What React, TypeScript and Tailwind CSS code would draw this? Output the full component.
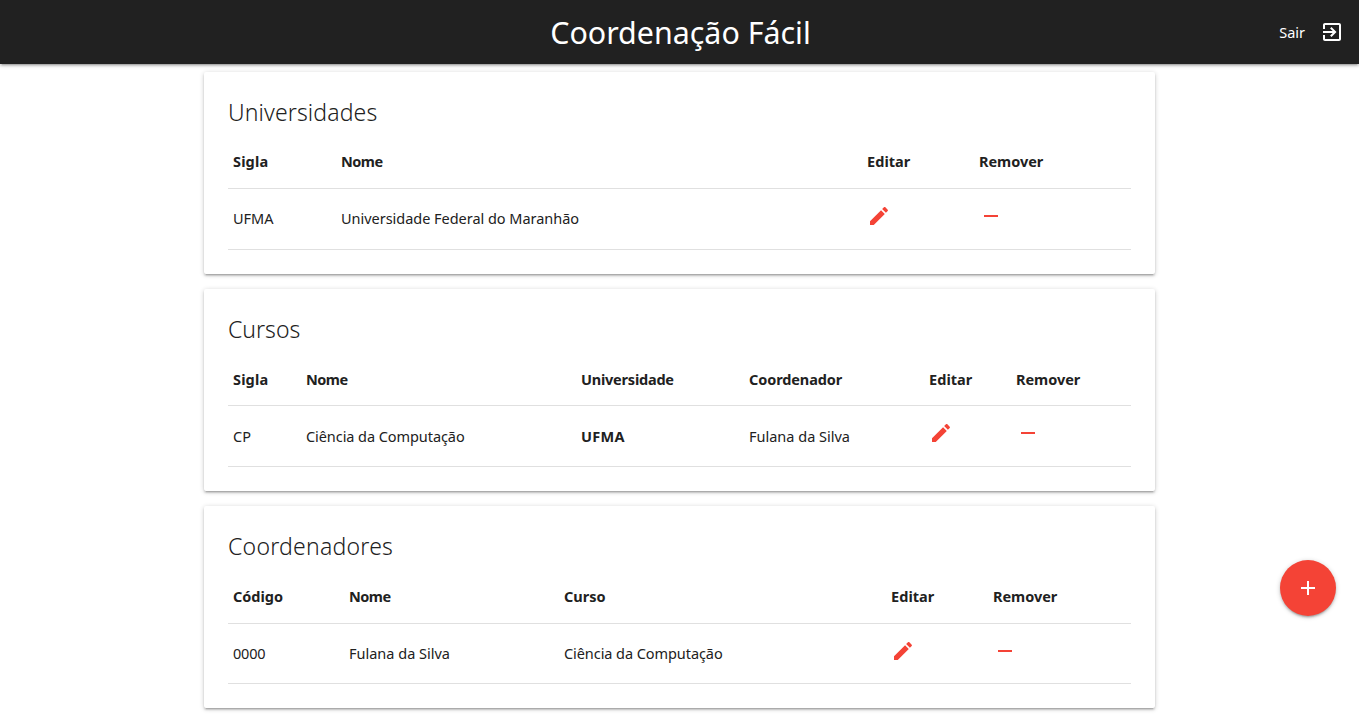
import type { ReactNode } from 'react';

const SHADOW =
  'shadow-[0_2px_2px_0_rgba(0,0,0,0.14),0_3px_1px_-2px_rgba(0,0,0,0.12),0_1px_5px_0_rgba(0,0,0,0.2)]';

function Icon({ d }: { d: string }) {
  return (
    <svg viewBox="0 0 24 24" className="block size-6 shrink-0 fill-current" aria-hidden="true">
      <path d={d} />
    </svg>
  );
}

const ICONS = {
  exit: 'M10.09 15.59L11.5 17l5-5-5-5-1.41 1.41L12.67 11H3v2h9.67l-2.58 2.59zM19 3H5c-1.11 0-2 .9-2 2v4h2V5h14v14H5v-4H3v4c0 1.1.89 2 2 2h14c1.1 0 2-.9 2-2V5c0-1.1-.9-2-2-2z',
  edit: 'M3 17.25V21h3.75L17.81 9.94l-3.75-3.75L3 17.25zM20.71 7.04c.39-.39.39-1.02 0-1.41l-2.34-2.34c-.39-.39-1.02-.39-1.41 0l-1.83 1.83 3.75 3.75 1.83-1.83z',
  remove: 'M19 13H5v-2h14v2z',
  add: 'M19 13h-6v6h-2v-6H5v-2h6V5h2v6h6v2z',
};

type CardProps = {
  title: string;
  titleClass: string;
  columns: string;
  headClass: string;
  rowClass: string;
  head: ReactNode[];
  row: ReactNode[];
};

function Card({ title, titleClass, columns, headClass, rowClass, head, row }: CardProps) {
  return (
    <section className={`h-[202px] rounded-[2px] bg-white px-6 pt-6 ${SHADOW}`}>
      <h2 className={`text-[23px] leading-8 font-light ${titleClass}`}>{title}</h2>
      <div className={`grid border-b border-[#e0e0e0] leading-[22px] font-bold ${columns} ${headClass}`}>
        {head.map((cell, i) => (
          <div key={i} className="pl-[5px] whitespace-nowrap">{cell}</div>
        ))}
      </div>
      <div className={`grid border-b border-[#e0e0e0] leading-[22px] ${columns} ${rowClass}`}>
        {row.map((cell, i) => (
          <div key={i} className="pl-[5px] whitespace-nowrap">{cell}</div>
        ))}
        <a href="#" aria-label="Editar" className="-mt-[3px] self-start pl-[5px] text-[#f44336]">
          <Icon d={ICONS.edit} />
        </a>
        <a href="#" aria-label="Remover" className="-mt-[3px] self-start pl-[5px] text-[#f44336]">
          <Icon d={ICONS.remove} />
        </a>
      </div>
    </section>
  );
}

const sigla = <span className="tracking-[0.15px]">Sigla</span>;
const editar = <span className="tracking-[0.05px]">Editar</span>;
const remover = <span className="tracking-[-0.03px]">Remover</span>;
const nome = <span className="tracking-[-0.5px]">Nome</span>;
const computacao = <span className="tracking-[-0.07px]">Ciência da Computação</span>;

export default function App() {
  return (
    <div className="relative h-[723px] overflow-hidden bg-white font-['Noto_Sans',sans-serif] text-[14.5px] text-[#212121]">
      <header className={`relative z-10 grid h-16 grid-cols-[1fr_auto_1fr] items-center bg-[#212121] text-white ${SHADOW}`}>
        <h1 className="col-start-2 pt-[2px] pl-[2px] text-[30.4px] leading-[62px]">Coordenação Fácil</h1>
        <a href="#" className="flex items-center justify-end gap-[15px] pr-[15px]">
          <span className="leading-[22px]">Sair</span>
          <Icon d={ICONS.exit} />
        </a>
      </header>

      <main className="mx-auto mt-2 flex w-[951px] flex-col gap-[15px]">
        <Card
          title="Universidades"
          titleClass="tracking-[0.12px]"
          columns="grid-cols-[108px_526px_112px_157px]"
          headClass="h-[61px] pt-[22px]"
          rowClass="h-[61px] pt-[18px]"
          head={[sigla, nome, editar, remover]}
          row={['UFMA', <span className="tracking-[-0.03px]">Universidade Federal do Maranhão</span>]}
        />
        <Card
          title="Cursos"
          titleClass=""
          columns="grid-cols-[73px_275px_168px_180px_87px_120px]"
          headClass="h-[61px] pt-[23px]"
          rowClass="h-[61px] pt-[19px] [&>a]:-mt-1"
          head={[
            sigla,
            nome,
            <span className="tracking-[-0.22px]">Universidade</span>,
            <span className="tracking-[-0.1px]">Coordenador</span>,
            editar,
            remover,
          ]}
          row={['CP', computacao, <b className="tracking-[0.3px]">UFMA</b>, 'Fulana da Silva']}
        />
        <Card
          title="Coordenadores"
          titleClass="tracking-[0.24px]"
          columns="grid-cols-[116px_215px_327px_102px_143px]"
          headClass="h-[62px] pt-[23px]"
          rowClass="h-[60px] pt-[18px]"
          head={['Código', nome, 'Curso', editar, remover]}
          row={[<span className="tracking-[-0.2px]">0000</span>, 'Fulana da Silva', computacao]}
        />
      </main>

      <button
        aria-label="Adicionar"
        className={`absolute right-[23px] bottom-[107px] flex size-14 items-center justify-center rounded-full bg-[#f44336] text-white ${SHADOW}`}
      >
        <Icon d={ICONS.add} />
      </button>
    </div>
  );
}
